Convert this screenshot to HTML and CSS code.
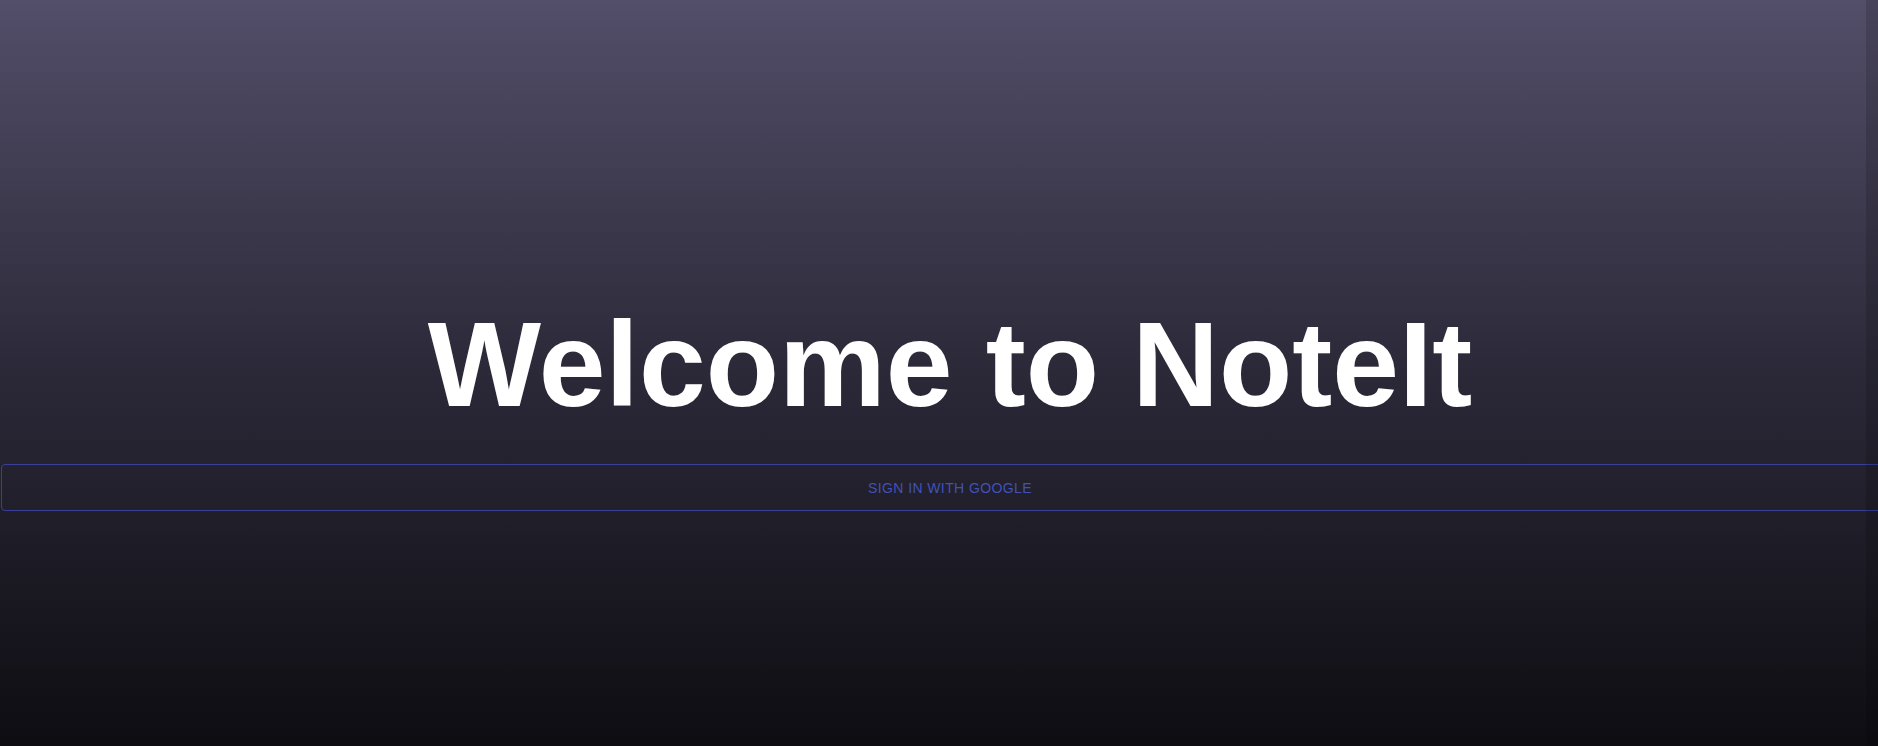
FILE: index.html
```html
<!DOCTYPE html>
<html lang="en">
<head>
<meta charset="utf-8">
<title>NoteIt</title>
<link rel="stylesheet" href="styles.css">
</head>
<body>
<div class="page">
  <main class="hero">
    <h1 class="title">Welcome to NoteIt</h1>
    <button class="google-btn" type="button">Sign in with Google</button>
  </main>
  <div class="edge"></div>
</div>
</body>
</html>
```

FILE: styles.css
```css
html, body {
  margin: 0;
  padding: 0;
  height: 100%;
  overflow: hidden;
}
body {
  background: #0f0e13;
  font-family: "Liberation Sans", Arial, sans-serif;
}
.page {
  position: relative;
  height: 746px;
  width: 100%;
  background: linear-gradient(to bottom, #534e69 0%, #2b2938 50%, #0e0d12 100%);
  overflow: hidden;
}
.hero {
  width: 1900px;
  padding-top: 295px;
  display: flex;
  flex-direction: column;
  align-items: center;
}
.title {
  margin: 0 0 31px;
  font-size: 120px;
  font-weight: 700;
  line-height: normal;
  color: #ffffff;
  text-align: center;
}
.google-btn {
  box-sizing: border-box;
  align-self: flex-start;
  width: 1898px;
  height: 47px;
  margin-left: 1px;
  background: transparent;
  border: 1px solid #3a409a;
  border-radius: 4px;
  color: #4052b8;
  font-family: "Liberation Sans", Arial, sans-serif;
  font-size: 14px;
  font-weight: 500;
  letter-spacing: 0.02857em;
  text-transform: uppercase;
  cursor: pointer;
}
.edge {
  position: absolute;
  top: 0;
  right: 0;
  width: 12px;
  height: 100%;
  background: rgba(0, 0, 0, 0.14);
}
```
